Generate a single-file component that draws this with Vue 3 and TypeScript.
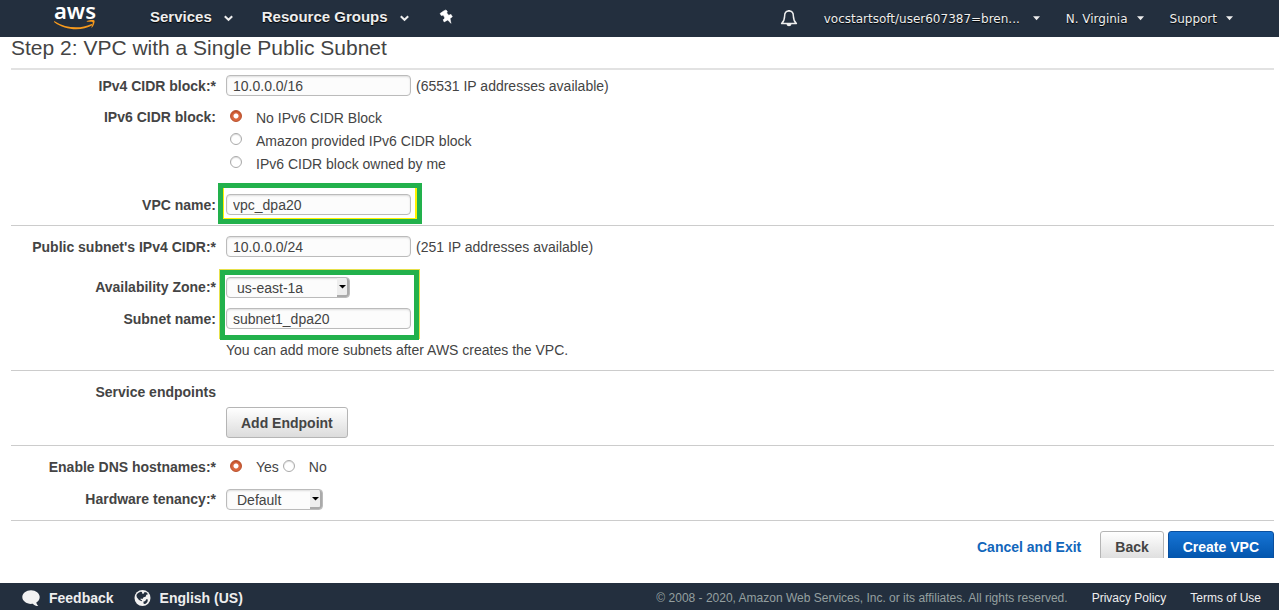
<script setup lang="ts">
import { ref } from 'vue'

const ipv4Cidr = ref('10.0.0.0/16')
const ipv6Option = ref('none')
const vpcName = ref('vpc_dpa20')
const subnetCidr = ref('10.0.0.0/24')
const zone = ref('us-east-1a')
const subnetName = ref('subnet1_dpa20')
const dnsHostnames = ref('Yes')
const tenancy = ref('Default')

const ipv6Options = [
  { value: 'none', label: 'No IPv6 CIDR Block' },
  { value: 'amazon', label: 'Amazon provided IPv6 CIDR block' },
  { value: 'owned', label: 'IPv6 CIDR block owned by me' },
]
const accountMenus = [
  { id: 'user', label: 'vocstartsoft/user607387=bren...' },
  { id: 'region', label: 'N. Virginia' },
  { id: 'support', label: 'Support' },
]
</script>

<template>
  <div class="page">
    <header class="topbar">
      <a class="logo" href="#" aria-label="AWS home">
        <span class="logo-text">aws</span>
        <svg width="44" height="12" viewBox="0 0 44 12">
          <path d="M.6 1.200C12 8.600 27 9 37 4.200c1.100-.5 2 .6.900 1.300C28 11.200 11 10.600.3 2.200c-.6-.6-.3-1.300.3-1z" fill="#f79a1c" />
          <path d="M32.800 1.200c1.800-1.300 6.900-1.700 7.600-.8.7.9-.4 5.400-2.500 7.200-.4.3-.7.1-.5-.3.6-1.300 1.700-4.400 1.200-5.200-.6-.7-4-.4-5.400-.3-.5 0-.8-.3-.4-.6z" fill="#f79a1c" />
        </svg>
      </a>
      <nav class="menus">
        <button v-for="m in ['Services', 'Resource Groups']" :key="m" type="button" class="menu">
          {{ m }}
          <svg width="9" height="7" viewBox="0 0 9 7"><path d="M.8 1.200l3.700 3.600 3.700-3.600" fill="none" stroke="#eee" stroke-width="2" /></svg>
        </button>
        <button type="button" class="icon-button" aria-label="Pin shortcuts">
          <svg width="16" height="16" viewBox="0 0 16 16">
            <path d="M5.600 2.100L8 .9l1.300 1.700-.6 1.400 2 2.300 2.300-.9 1.300 2.400-2.300 1.600.9 4.900-3.100-3.400-3.700 2-.9-2.100 1.700-1.700-1.600-3-2 .5-1.200-2.100z" fill="#fff" stroke="#fff" stroke-width=".6" stroke-linejoin="round" />
          </svg>
        </button>
      </nav>
      <div class="account">
        <button type="button" class="icon-button" aria-label="Notifications">
          <svg width="18" height="19" viewBox="0 0 18 19">
            <path d="M9 2C5.800 2 4.600 4.600 4.600 7.200c0 4-1.300 5.600-3 7.300h14.800c-1.700-1.700-3-3.300-3-7.300C13.400 4.600 12.200 2 9 2z" fill="none" stroke="#eee" stroke-width="1.500" stroke-linejoin="round" />
            <path d="M7.900 2V.9h2.200V2zM6.600 15h4.800c0 3-4.800 3-4.800 0z" fill="#eee" />
          </svg>
        </button>
        <button v-for="m in accountMenus" :key="m.id" type="button" class="account-menu">
          <span :class="m.id">{{ m.label }}</span>
          <svg width="7" height="5" viewBox="0 0 7 5"><path d="M0 .3h7L3.500 4.300z" fill="#eee" /></svg>
        </button>
      </div>
    </header>

    <main class="content">
      <h1>Step 2: VPC with a Single Public Subnet</h1>
      <form @submit.prevent>
        <section class="first">
          <div class="row">
            <label class="name" for="ipv4">IPv4 CIDR block:*</label>
            <input id="ipv4" v-model="ipv4Cidr" type="text" class="field" />
            <span class="hint">(65531 IP addresses available)</span>
          </div>
          <div class="row top" role="radiogroup" aria-labelledby="ipv6">
            <span id="ipv6" class="name">IPv6 CIDR block:</span>
            <div class="radios">
              <label v-for="o in ipv6Options" :key="o.value" class="radio">
                <input v-model="ipv6Option" type="radio" name="ipv6" :value="o.value" />{{ o.label }}
              </label>
            </div>
          </div>
          <div class="row marked vpc">
            <label class="name" for="vpc">VPC name:</label>
            <input id="vpc" v-model="vpcName" type="text" class="field" />
            <div class="mark mark-vpc"></div>
          </div>
        </section>

        <section class="subnet">
          <div class="row">
            <label class="name" for="cidr">Public subnet's IPv4 CIDR:*</label>
            <input id="cidr" v-model="subnetCidr" type="text" class="field" />
            <span class="hint">(251 IP addresses available)</span>
          </div>
          <div class="marked pair">
            <div class="row pick">
              <label class="name" for="zone">Availability Zone:*</label>
              <span class="select zone">
                <select id="zone" v-model="zone"><option>us-east-1a</option></select>
                <svg class="arrow" viewBox="0 0 10 17"><path d="M2 7h7L5.500 10.500z" /></svg>
              </span>
            </div>
            <div class="row">
              <label class="name" for="subnet">Subnet name:</label>
              <input id="subnet" v-model="subnetName" type="text" class="field" />
            </div>
            <div class="mark mark-subnet"></div>
          </div>
          <div class="row">
            <span class="name"></span>
            <span class="note">You can add more subnets after AWS creates the VPC.</span>
          </div>
        </section>

        <section class="endpoints">
          <div class="row"><span class="name">Service endpoints</span></div>
          <div class="row">
            <span class="name"></span>
            <button type="button" class="btn">Add Endpoint</button>
          </div>
        </section>

        <section class="options">
          <div class="row" role="radiogroup" aria-labelledby="dns">
            <span id="dns" class="name">Enable DNS hostnames:*</span>
            <div class="radios inline">
              <label v-for="o in ['Yes', 'No']" :key="o" class="radio">
                <input v-model="dnsHostnames" type="radio" name="dns" :value="o" />{{ o }}
              </label>
            </div>
          </div>
          <div class="row pick">
            <label class="name" for="tenancy">Hardware tenancy:*</label>
            <span class="select tenancy">
              <select id="tenancy" v-model="tenancy"><option>Default</option></select>
              <svg class="arrow" viewBox="0 0 10 17"><path d="M2 7h7L5.500 10.500z" /></svg>
            </span>
          </div>
        </section>

        <div class="actions">
          <a href="#">Cancel and Exit</a>
          <button type="button" class="btn">Back</button>
          <button type="submit" class="btn primary">Create VPC</button>
        </div>
      </form>
    </main>

    <footer class="footer">
      <button type="button" class="foot-button">
        <svg width="18" height="17" viewBox="0 0 18 17"><path d="M9 .3c4.800 0 8.700 3 8.700 6.800 0 2.300-1.300 4.300-3.400 5.500.2 1.300 1 2.500 2 3.500-2.300 0-4.200-.9-5.500-2.300-.6.100-1.200.1-1.800.1C4.200 13.900.3 10.900.3 7.100S4.200.3 9 .3z" fill="#f2f2f2" /></svg>
        Feedback
      </button>
      <button type="button" class="foot-button">
        <svg width="17" height="17" viewBox="0 0 17 17">
          <circle cx="8.500" cy="8" r="8" fill="#f2f2f2" />
          <path d="M4 3l2.500-1.200 1.600.3-.2 1.300 1.700.3 1-1.700 2 .5 1.400 1.700-1.600.5-.8 2.100-2 .5-1.200 1.700-1.700-.6-.2 1 1.700 1.200-.6.600L5 9.900 2.800 7.200 2.400 5z" fill="#232f3e" />
          <path d="M9.300 11.700l2-.6.9-1.900 1.700.3-.5 2.400-1.700 1.800-1.900.2z" fill="#232f3e" />
        </svg>
        English (US)
      </button>
      <div class="legal">
        <span>© 2008 - 2020, Amazon Web Services, Inc. or its affiliates. All rights reserved.</span>
        <a href="#">Privacy Policy</a>
        <a href="#">Terms of Use</a>
      </div>
    </footer>
  </div>
</template>

<style>
body {
  margin: 0;
  background: #fff;
}
</style>

<style scoped>
.page {
  display: flex;
  flex-direction: column;
  height: 100vh;
  font: 14px/21px "Liberation Sans", Arial, sans-serif;
  color: #444;
}
button,
input,
select {
  font: inherit;
  color: inherit;
  box-sizing: border-box;
  margin: 0;
}
svg {
  display: block;
  flex: none;
}

.topbar {
  display: flex;
  align-items: center;
  flex: none;
  height: 37px;
  padding: 0 46px 0 54px;
  background: #232f3e;
  color: #eee;
  white-space: nowrap;
}
.logo {
  display: block;
  width: 44px;
  height: 37px;
  text-decoration: none;
}
.logo-text {
  display: block;
  width: 41px;
  height: 20px;
  font: 600 22px/20px "Noto Sans", sans-serif;
  text-align: center;
  color: #fff;
}
.menus {
  display: flex;
  align-items: center;
  gap: 29px;
  margin-left: 52px;
  padding-bottom: 4px;
}
.topbar button,
.foot-button {
  display: flex;
  align-items: center;
  padding: 0;
  border: 0;
  background: none;
}
.menu {
  gap: 12px;
  font-size: 15px;
  font-weight: bold;
  text-shadow: 0 1px 1px #000;
}
.menu svg {
  margin-top: 4px;
}
.account {
  display: flex;
  align-items: center;
  gap: 26px;
  margin-left: auto;
}
.account-menu {
  gap: 9px;
  font: 12px/21px "DejaVu Sans", sans-serif;
  text-shadow: 0 1px 1px #000;
}
.account-menu span {
  padding-top: 2px;
  text-align: left;
}
.user {
  width: 200px;
}

.content {
  flex: 1;
  min-height: 0;
  overflow: hidden;
  margin-bottom: 25px;
  padding: 0 5px 0 11px;
}
h1 {
  margin: 0;
  padding-bottom: 9px;
  border-bottom: 2px solid #e2e2e2;
  font-size: 21px;
  line-height: 22px;
  font-weight: normal;
}
section {
  border-bottom: 1px solid #ccc;
}
.first {
  padding: 4px 0 9px;
}
.subnet {
  display: grid;
  gap: 8px;
  padding: 9px 0;
}
.endpoints {
  display: grid;
  gap: 4px;
  padding: 9px 0 7px;
}
.options {
  display: grid;
  gap: 10px;
  padding: 9px 0;
}
.row {
  display: flex;
  align-items: center;
  min-height: 23px;
}
.row.top {
  align-items: flex-start;
  margin-top: 8px;
}
.name {
  width: 205px;
  flex: none;
  margin-right: 10px;
  text-align: right;
  font-weight: bold;
}
.name,
.hint,
.note,
.radios {
  padding-top: 2px;
}
.pick .name {
  padding-top: 0;
}
.field {
  width: 185px;
  height: 21px;
  padding: 1px 6px 0;
  border: 1px solid #bbb;
  border-radius: 4px;
  background: #fcfcfc;
  box-shadow: inset 0 1px 2px #ddd;
}
.hint {
  margin-left: 5px;
}
.radios {
  display: flex;
  flex-direction: column;
}
.radios.inline {
  flex-direction: row;
}
.radio {
  display: flex;
  align-items: center;
  line-height: 23px;
}
.inline .radio {
  line-height: 21px;
}
.radio input {
  appearance: none;
  width: 12px;
  height: 12px;
  margin: 0 14px 5px 4px;
  border: 1px solid #aaa;
  border-radius: 50%;
  background: #fff;
  box-shadow: inset 0 1px 1px #ddd;
}
.inline .radio input {
  margin-bottom: 3px;
}
.radio input:checked {
  border-color: #b9502c;
  background: radial-gradient(circle, #fff 0 2px, #d9683f 3px);
  box-shadow: inset 0 1px 1px #b94b25;
}
.vpc {
  margin-top: 17px;
}
.marked {
  position: relative;
}
.pair {
  display: grid;
  gap: 8px;
  margin-top: 10px;
}
.mark {
  position: absolute;
  box-sizing: border-box;
  border: 5px solid #22b14c;
  pointer-events: none;
}
.mark-vpc {
  left: 207px;
  top: -10px;
  width: 204px;
  height: 41px;
  box-shadow: inset 1px -1px #fff200, inset -2px 0 #fff200;
}
.mark-subnet {
  left: 209px;
  top: -6px;
  width: 199px;
  height: 70px;
  box-shadow: -1px -1px #e6e04a, 1px -1px #e6e04a;
}
.select {
  position: relative;
  height: 21px;
}
.select select {
  display: block;
  appearance: none;
  width: 100%;
  height: 21px;
  padding: 0 10px;
  border: 1px solid #bbb;
  border-radius: 4px;
  background: #fcfcfc;
  box-shadow: inset 0 1px 2px #ddd;
}
.zone {
  width: 124px;
}
.tenancy {
  width: 97px;
}
.arrow {
  position: absolute;
  right: 1px;
  top: 1px;
  width: 10px;
  height: 17px;
  border-right: 2px solid #aaa;
  border-bottom: 2px solid #aaa;
  border-radius: 0 3px 3px 0;
  background: #eee;
  pointer-events: none;
}
.btn {
  height: 31px;
  padding: 1px 14px 0;
  border: 1px solid #b5b5b5;
  border-radius: 3px;
  background: linear-gradient(#fff, #dcdcdc);
  font-weight: bold;
}
.btn.primary {
  border-color: #0a4f9e;
  background: linear-gradient(#1674d5, #0152a8);
  color: #fff;
}
.actions {
  display: flex;
  align-items: center;
  justify-content: flex-end;
  gap: 4px;
  padding: 10px 0;
}
.actions a {
  margin-right: 15px;
  padding-top: 2px;
  color: #1166bb;
  font-weight: bold;
  text-decoration: none;
}

.footer {
  display: flex;
  align-items: center;
  flex: none;
  gap: 20px;
  height: 27px;
  padding: 3px 18px 0 22px;
  box-sizing: border-box;
  background: #232f3e;
  color: #eee;
  white-space: nowrap;
}
.foot-button {
  gap: 9px;
  font-weight: bold;
}
.legal {
  display: flex;
  gap: 24px;
  margin-left: auto;
  font-size: 12px;
}
.legal span {
  color: #95a0a0;
}
.legal a {
  color: #eee;
  text-decoration: none;
}
</style>
